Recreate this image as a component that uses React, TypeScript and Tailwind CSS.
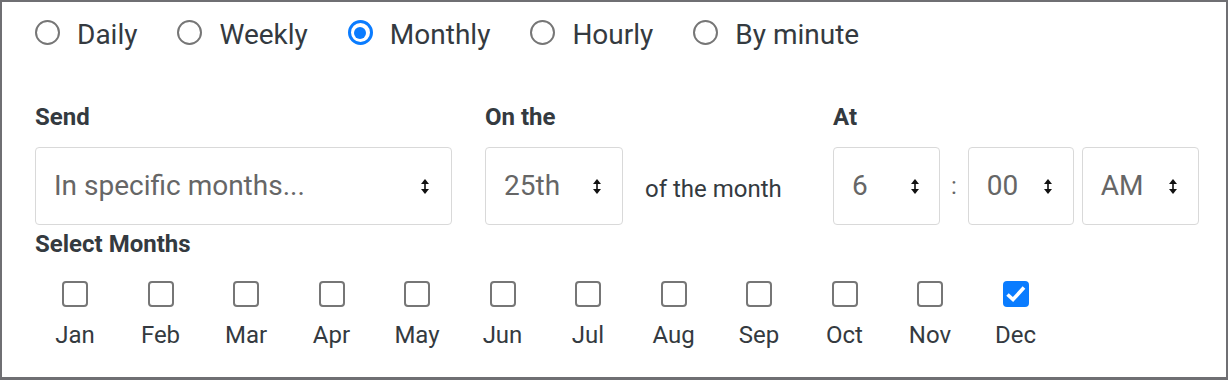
import React from "react";

const months = ["Jan", "Feb", "Mar", "Apr", "May", "Jun", "Jul", "Aug", "Sep", "Oct", "Nov", "Dec"];
const freqs = ["Daily", "Weekly", "Monthly", "Hourly", "By minute"];

function Arrows() {
  return (
    <svg width="8" height="15" viewBox="0 0 8 15" className="shrink-0">
      <path d="M4 0 L8 5 H0 Z" fill="#111" />
      <rect x="3.2" y="4" width="1.6" height="7" fill="#111" />
      <path d="M0 10 H8 L4 15 Z" fill="#111" />
    </svg>
  );
}

function Select({ value, width, right }: { value: string; width: string; right: string }) {
  return (
    <div
      className={`${width} ${right} flex h-[78px] items-center justify-between rounded-[4px] border border-[#d9d9d9] bg-white pl-[18px] text-[28px] leading-[32px] text-[#666]`}
    >
      <span>{value}</span>
      <Arrows />
    </div>
  );
}

function Radio({ checked }: { checked?: boolean }) {
  if (checked) {
    return (
      <span className="flex h-[25px] w-[25px] shrink-0 items-center justify-center rounded-full border-[3px] border-[#0a7cff] bg-white">
        <span className="h-[12px] w-[12px] rounded-full bg-[#0a7cff]" />
      </span>
    );
  }
  return <span className="h-[25px] w-[25px] shrink-0 rounded-full border-2 border-[#767676] bg-white" />;
}

function Checkbox({ checked }: { checked?: boolean }) {
  if (checked) {
    return (
      <span className="flex h-[26px] w-[26px] items-center justify-center rounded-[4px] bg-[#0a7cff]">
        <svg width="26" height="26" viewBox="0 0 26 26">
          <path d="M4.5 13.5 L10 18.5 L21 6.5" fill="none" stroke="#fff" strokeWidth="3.6" />
        </svg>
      </span>
    );
  }
  return <span className="h-[26px] w-[26px] rounded-[4px] border-2 border-[#767676] bg-white" />;
}

export default function App() {
  return (
    <div
      className="h-[380px] w-[1228px] border-2 border-b-[3px] border-[#6f6f73] bg-white pl-[33px] pt-[18px] text-[#343a40]"
      style={{ fontFamily: "Roboto, 'Liberation Sans', sans-serif" }}
    >
      <div className="flex gap-[40px]">
        {freqs.map((f) => (
          <label key={f} className="flex items-start gap-[17px]">
            <Radio checked={f === "Monthly"} />
            <span className="-mt-[1px] text-[28px] leading-[32px]">{f}</span>
          </label>
        ))}
      </div>

      <div className="mt-[52px] flex">
        <div className="w-[417px]">
          <p className="text-[24px] font-bold leading-[28px]">Send</p>
          <div className="mt-[16px]">
            <Select value="In specific months..." width="w-[417px]" right="pr-[22px]" />
          </div>
        </div>

        <div className="ml-[33px] w-[348px]">
          <p className="text-[24px] font-bold leading-[28px]">On the</p>
          <div className="mt-[16px] flex items-center">
            <Select value="25th" width="w-[138px]" right="pr-[21px]" />
            <span className="ml-[22px] mt-[6px] text-[24px] leading-[28px]">of the month</span>
          </div>
        </div>

        <div>
          <p className="text-[24px] font-bold leading-[28px]">At</p>
          <div className="mt-[16px] flex items-center">
            <Select value="6" width="w-[107px]" right="pr-[20px]" />
            <span className="mx-[11px] text-[24px] leading-[28px] text-[#666]">:</span>
            <Select value="00" width="w-[106px]" right="pr-[21px]" />
            <div className="ml-[8px]">
              <Select value="AM" width="w-[117px]" right="pr-[21px]" />
            </div>
          </div>
        </div>
      </div>

      <p className="mt-[5px] text-[24px] font-bold leading-[28px]">Select Months</p>

      <div className="mt-[23px] flex gap-[5.5px]">
        {months.map((m) => (
          <div key={m} className="flex w-[80px] flex-col items-center">
            <Checkbox checked={m === "Dec"} />
            <span className="mt-[14px] text-[24px] leading-[28px]">{m}</span>
          </div>
        ))}
      </div>
    </div>
  );
}
